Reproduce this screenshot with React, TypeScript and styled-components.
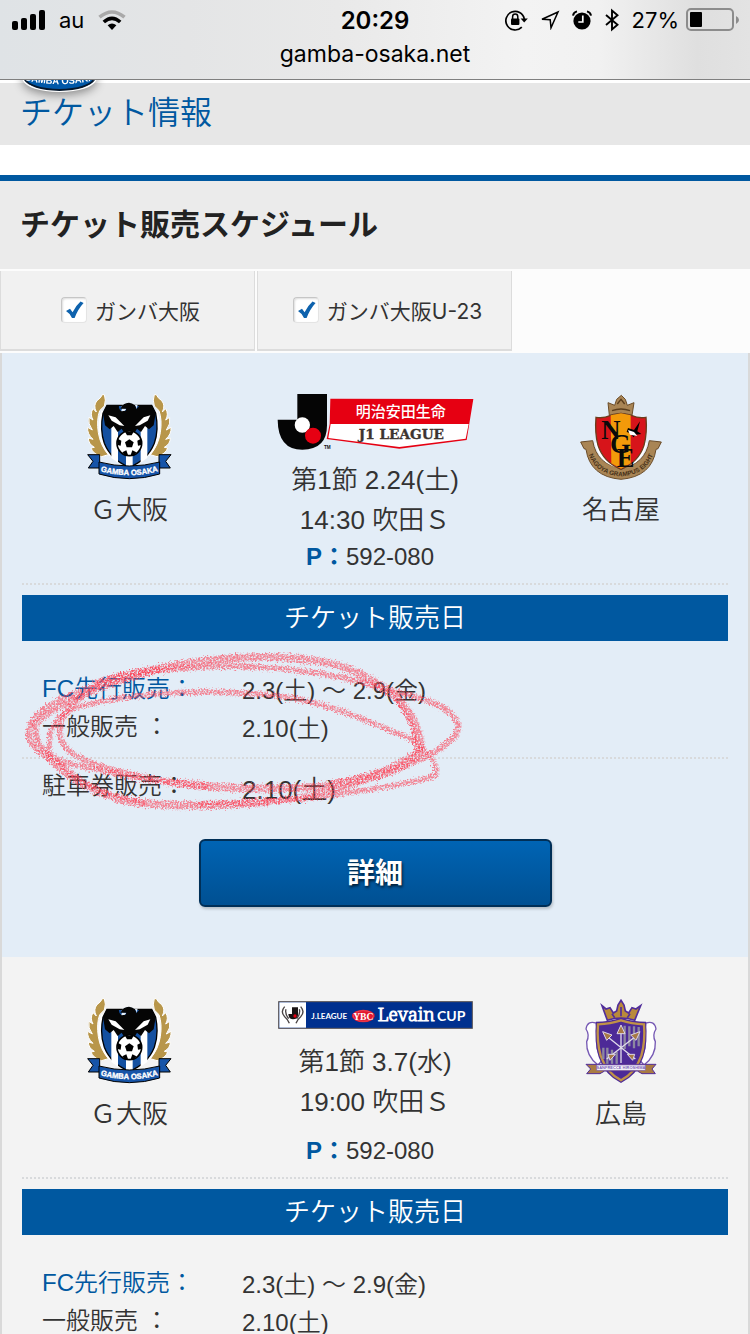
import React from 'react';
import styled, { createGlobalStyle } from 'styled-components';

const GlobalStyle = createGlobalStyle`
  * { box-sizing: border-box; }
  body {
    margin: 0;
    background: #fff;
    color: #333;
    font-family: 'Liberation Sans', 'Noto Sans CJK JP', sans-serif;
    font-weight: 350;
  }
  h1, h2, h3, p, dl, dt, dd { margin: 0; }
  svg { display: block; }
`;

const blue = '#0058a0';

const Screen = styled.div`
  height: 100vh;
  display: flex;
  flex-direction: column;
`;

const BrowserBar = styled.header`
  position: relative;
  z-index: 2;
  flex: none;
  height: 80px;
  border-bottom: 1px solid #7f7f7f;
  background: linear-gradient(90deg, #dfe3e6 0%, #e4e5e6 25%, #e9e9e9 45%, #f3f3f3 70%, #f1f1f1 80%, #dfdfdf 93%, #e3e3e3 100%);
  color: #000;
  font-family: Inter, sans-serif;
  font-weight: 400;
`;

const StatusRow = styled.div`
  display: grid;
  grid-template-columns: 1fr auto 1fr;
  align-items: center;
  height: 40px;
  padding: 0 11px;
`;

const StatusGroup = styled.div<{ $end?: boolean }>`
  display: flex;
  align-items: center;
  justify-content: ${(p) => (p.$end ? 'flex-end' : 'flex-start')};
  gap: ${(p) => (p.$end ? '12px' : '14px')};
  font-size: 22px;
`;

const Clock = styled.time`
  font-size: 24px;
  font-weight: 600;
`;

const Charge = styled.span`
  display: flex;
  align-items: center;
  gap: 6px;
`;

const Address = styled.p`
  font-size: 23px;
  line-height: 28px;
  text-align: center;
`;

const Main = styled.main`
  flex: 1;
  min-height: 0;
  overflow-y: auto;
  scrollbar-width: none;
`;

const TitleBar = styled.div`
  position: relative;
  border-top: 3px solid #fff;
  padding: 0 20px 2px;
  background: #e7e7e7;
`;

const ClubBadge = styled.svg`
  position: absolute;
  top: -44px;
  left: 18px;
  filter: drop-shadow(0 3px 5px rgba(0, 0, 0, 0.4));
`;

const PageTitle = styled.h1`
  position: relative;
  color: ${blue};
  font-size: 32px;
  font-weight: 350;
  line-height: 60px;
`;

const SectionTitle = styled.h2`
  margin-top: 30px;
  border-top: 6px solid ${blue};
  padding: 0 20px;
  background: #ebebeb;
  color: #222;
  font-size: 30px;
  font-weight: 700;
  line-height: 88px;
`;

const Tabs = styled.div`
  display: flex;
  gap: 2px;
  padding: 2px 0;
  background: #fcfcfc;
`;

const Tab = styled.label`
  display: flex;
  flex: 0 0 34%;
  align-items: center;
  justify-content: center;
  gap: 8px;
  height: 80px;
  padding-left: 6px;
  border: 1px solid #dcdcdc;
  border-width: 0 1px 2px;
  background: #f1f1f1;
  font-family: Inter, 'Noto Sans CJK JP', sans-serif;
  font-size: 21px;
  font-weight: 400;
`;

const TickBox = styled.span`
  position: relative;
  width: 26px;
  height: 26px;

  svg {
    position: absolute;
    top: 4px;
    left: 5px;
    pointer-events: none;
  }

  input:not(:checked) + svg { display: none; }
`;

const Tick = styled.input`
  appearance: none;
  display: block;
  width: 26px;
  height: 26px;
  margin: 0;
  border: 1px solid #e4e4e4;
  border-top-color: #c6c6c6;
  border-left-color: #c6c6c6;
  border-radius: 4px;
  background: #fff;
  box-shadow: inset 1px 1px 2px #ddd;
`;

const Match = styled.article<{ $tone: string }>`
  border: 2px solid #d9d9d9;
  border-width: 0 2px;
  padding: 41px 20px 50px;
  background: ${(p) => p.$tone};
`;

const Fixture = styled.div`
  display: grid;
  grid-template-columns: repeat(3, 1fr);
  margin: 0 -16px;
  font-size: 26px;
  line-height: 40px;
  text-align: center;
`;

const Team = styled.div`
  display: flex;
  flex-direction: column;
  align-items: center;
  gap: 10px;
`;

const Kickoff = styled.div`
  display: flex;
  flex-direction: column;
  align-items: center;
`;

const CompetitionLogo = styled.div<{ $slim?: boolean }>`
  padding: ${(p) => (p.$slim ? '3px 0 13px' : '0 0 10px')};
`;

const PCode = styled.p`
  padding-right: 10px;
  font-size: 24px;
  line-height: 34px;
  text-align: center;

  b {
    color: ${blue};
    font-weight: 700;
  }
`;

const DottedRule = styled.hr<{ $gap: string }>`
  margin: ${(p) => p.$gap};
  border: 0;
  border-top: 2px dotted #d8dadc;
`;

const SaleHeading = styled.h3`
  margin-bottom: 29px;
  background: ${blue};
  color: #fff;
  font-size: 26px;
  font-weight: 350;
  line-height: 46px;
  text-align: center;
`;

const Sales = styled.div`
  position: relative;
`;

const SaleRow = styled.dl`
  display: grid;
  grid-template-columns: 200px 1fr;
  padding-left: 20px;
`;

const SaleLabel = styled.dt<{ $accent?: boolean }>`
  color: ${(p) => (p.$accent ? blue : 'inherit')};
  font-size: 24px;
  line-height: 38px;
`;

const SaleDate = styled.dd<{ $large?: boolean }>`
  padding-top: ${(p) => (p.$large ? '8px' : '4px')};
  font-size: ${(p) => (p.$large ? '26px' : '24px')};
  line-height: ${(p) => (p.$large ? '30px' : '34px')};
`;

const Scribble = styled.svg`
  position: absolute;
  top: -30px;
  left: -22px;
  pointer-events: none;
`;

const DetailButton = styled.button`
  display: block;
  width: 50%;
  height: 68px;
  margin: 34px auto 0;
  padding: 0 0 4px;
  border: 2px solid #002f57;
  border-radius: 6px;
  background: linear-gradient(#0064b4, #005092);
  box-shadow: 1px 2px 3px rgba(0, 0, 0, 0.2);
  color: #fff;
  font-family: inherit;
  font-size: 28px;
  font-weight: 700;
  text-shadow: 1px 2px 3px rgba(0, 0, 0, 0.7);
`;

const SignalIcon = () => (
  <svg width="34" height="22" viewBox="0 0 34 22">
    <rect x="1" y="12" width="6" height="9" rx="2" />
    <rect x="10" y="9" width="6" height="12" rx="2" />
    <rect x="19" y="5" width="6" height="16" rx="2" />
    <rect x="28" y="1" width="6" height="20" rx="2" />
  </svg>
);

const WifiIcon = () => (
  <svg width="28" height="20" viewBox="0 0 28 20" fill="none" strokeWidth="3.6">
    <path d="M1.5 7.2Q14-3.2 26.5 7.2" stroke="#a9a9a9" />
    <path d="M5.8 12Q14 4.6 22.2 12" stroke="#000" />
    <path d="M14 20l-4.4-4.7Q14 11.600 18.400 15.300z" fill="#000" />
  </svg>
);

const RotationLockIcon = () => (
  <svg width="23" height="22" viewBox="0 0 23 22">
    <path d="M16.800 18.200A9.300 9.300 0 1 1 19.300 10" fill="none" stroke="#000" strokeWidth="1.700" />
    <path d="M15.600 9.400h7.200l-3.600 4.200z" />
    <rect x="6" y="9.500" width="8.400" height="6.600" rx="1" />
    <path d="M7.600 10V7.700a2.600 2.600 0 0 1 5.200 0V10" fill="none" stroke="#000" strokeWidth="1.500" />
  </svg>
);

const LocationIcon = () => (
  <svg width="20" height="20" viewBox="0 0 20 20" fill="none" stroke="#000" strokeWidth="1.500" strokeLinejoin="miter">
    <path d="M18 2L2 9.200l8.200.6.8 8z" />
  </svg>
);

const AlarmIcon = () => (
  <svg width="20" height="20" viewBox="0 0 20 20">
    <circle cx="10" cy="11" r="8.600" />
    <path d="M1 5.600Q1.500 2.200 5 1.400M19 5.600Q18.500 2.200 15 1.400" fill="none" stroke="#000" strokeWidth="2" />
    <path d="M10.800 5.500V12H6.300" fill="none" stroke="#fff" strokeWidth="1.700" />
  </svg>
);

const BluetoothIcon = () => (
  <svg width="16" height="24" viewBox="0 0 16 24" fill="none" stroke="#000" strokeWidth="1.900">
    <path d="M2 7l11.500 9.700L8 21.500v-19l5.500 4.800L2 17" />
  </svg>
);

const BatteryIcon = () => (
  <svg width="54" height="24" viewBox="0 0 54 24">
    <rect x="2" y="1" width="46" height="21" rx="4" fill="none" stroke="#8c8c8c" strokeWidth="2" />
    <rect x="5" y="4" width="12" height="15" rx="1" />
    <path d="M51 8q3 1.500 3 4t-3 4z" fill="#8c8c8c" />
  </svg>
);

const CheckIcon = () => (
  <svg width="18" height="18" viewBox="0 0 18 18">
    <path d="M0 10l4-2.200 2.600 3.400Q10 4.600 14.500 0.600L17.600 2Q12 8 8.600 17H6Q3.600 12 0 10z" fill="#0e62ad" />
  </svg>
);

const GambaEmblem = () => (
  <svg width="86" height="86" viewBox="45 42 258 258">
    <path d="M100 44Q106 60 100 78L86 92Q76 120 82 158 88 196 112 224L92 230Q66 222 60 204L70 202Q52 192 52 174L66 178Q48 162 50 142L64 150Q50 132 54 112L66 120Q56 102 66 86L76 96Q66 76 78 62 90 54 94 44z" fill="#b8964a" stroke="#fff" strokeWidth="3" />
    <path d="M250 44Q244 60 250 78L264 92Q274 120 268 158 262 196 238 224L258 230Q284 222 290 204L280 202Q298 192 298 174L284 178Q302 162 300 142L286 150Q300 132 296 112L284 120Q294 102 284 86L274 96Q284 76 272 62 260 54 256 44z" fill="#b8964a" stroke="#fff" strokeWidth="3" />
    <path d="M94 92Q80 130 90 170 98 206 118 226M256 92Q270 130 260 170 252 206 232 226" fill="none" stroke="#fff" strokeWidth="7" />
    <path d="M96 100L108 76H242L254 100Q264 150 250 190 230 240 175 262 120 240 100 190 86 150 96 100z" fill="#1450a0" stroke="#000" strokeWidth="4" />
    <path d="M121 132h20v116l-20-14zM209 132h20v102l-20 14zM165 150h20v110h-20z" fill="#fff" />
    <path d="M144 74L153 74Q154 86 150 96L158 98 166 86 150 84Q154 68 172 68 192 68 196 84L194 94 200 74 206 74" fill="#e3edf7" />
    <path d="M108 76H144Q142 88 152 94L164 92 166 86 148 86Q156 68 174 68 194 70 196 88L206 76H242L254 100 248 136 234 148 222 138 210 156 198 146 190 160H160L152 146 140 156 128 138 116 148 102 136 96 100z" fill="#050505" />
    <path d="M112 106L134 112 160 138 146 136 122 122zM238 106L218 112 192 138 206 136 230 122z" fill="#fff" />
    <circle cx="175" cy="190" r="37" fill="#fff" stroke="#000" strokeWidth="5" />
    <path d="M175 178l13 9-5 15h-16l-5-15z" fill="#000" />
    <path d="M162 155h26l-6 11h-14zM140 176l11 6-2 15-10-2zM210 176l-11 6 2 15 10-2zM154 217l12-6 5 14-8 2zM196 217l-12-6-5 14 8 2z" fill="#000" />
    <path d="M50 224h36v40H52l14-20zM300 224h-36v40h34l-14-20z" fill="#1654a8" stroke="#000" strokeWidth="3" />
    <path d="M84 246Q175 270 266 246v36Q175 310 84 282z" fill="#1654a8" stroke="#000" strokeWidth="3" />
    <path id="gambaCurve" d="M90 274Q175 297 260 274" fill="none" />
    <text fill="#fff" stroke="#fff" fontFamily="Liberation Sans, sans-serif" fontSize="23" fontWeight="700">
      <textPath href="#gambaCurve" startOffset="50%" textAnchor="middle">GAMBA OSAKA</textPath>
    </text>
  </svg>
);

const NagoyaEmblem = () => (
  <svg width="86" height="86" viewBox="58 42 258 258">
    <path d="M152 106L148 68 168 76 174 58 188 46 200 58 206 76 226 68 220 106Q187 94 152 106z" fill="#a98555" stroke="#6b4c28" strokeWidth="3" />
    <path d="M160 92Q187 82 214 92M176 72l11-14 11 14" fill="none" stroke="#5a3d1c" strokeWidth="4" />
    <path d="M66 186L102 182Q114 254 187 264 260 254 272 182L308 186 298 206 292 208Q280 290 187 298 94 290 82 208L76 206z" fill="#a98555" stroke="#6b4c28" strokeWidth="3" />
    <path d="M112 188Q126 254 187 262 248 254 262 188" fill="none" stroke="#fff" strokeWidth="6" />
    <path d="M112 112Q134 116 156 106L187 100 218 106Q240 116 262 112 266 160 256 196 240 246 187 268 134 246 118 196 108 160 112 112z" fill="#d7141a" stroke="#6b3d1c" strokeWidth="4" />
    <path d="M156 106L187 100 216 106V250L187 266 158 250z" fill="#f39a0a" />
    <path d="M208 144l18 6 18-26-8 30 12 8-16 2-8 8-8-12-12-4z" fill="#000" />
    <path d="M208 150l18 6 10 12-22-4z" fill="#fff" />
    <g fill="#0a0a0a" fontFamily="Liberation Serif, serif" fontWeight="700" fontSize="80">
      <text x="128" y="178">N</text>
      <text x="154" y="218">G</text>
      <text x="174" y="260">E</text>
    </g>
    <path id="nagoyaCurve" d="M84 200Q100 284 187 289 274 284 290 200" fill="none" />
    <text fill="#453018" fontFamily="Liberation Sans, sans-serif" fontSize="19" fontWeight="700">
      <textPath href="#nagoyaCurve" startOffset="50%" textAnchor="middle">NAGOYA GRAMPUS EIGHT</textPath>
    </text>
  </svg>
);

const HiroshimaEmblem = () => (
  <svg width="86" height="86" viewBox="26 39 258 258">
    <path d="M114 106L98 62 110 72 122 68 132 84 142 78 146 60 155 46 164 60 168 78 178 84 188 68 200 72 214 62 196 106Q155 92 114 106z" fill="#b98a3a" stroke="#512d9a" strokeWidth="5" />
    <path d="M128 86l8 12M182 86l-8 12M155 66v28" stroke="#512d9a" strokeWidth="5" />
    <path d="M80 114Q54 106 50 132 62 150 52 170 50 212 86 240L98 226Q74 190 86 150zM230 114Q256 106 260 132 248 150 258 170 260 212 224 240L212 226Q236 190 224 150z" fill="#fff" stroke="#7659b4" strokeWidth="4" />
    <path d="M80 110Q120 110 155 98 190 110 230 110 236 170 222 216 204 270 155 294 106 270 88 216 74 170 80 110z" fill="#4d2a97" />
    <path d="M86 118Q124 116 155 106 186 116 224 118 228 170 216 212 198 264 155 286 112 264 94 212 82 170 86 118z" fill="#4d2a97" stroke="#c09247" strokeWidth="7" />
    <path d="M166 122v70M180 124v60M194 124v66M208 126v58M102 188v34M114 188v50M128 194v44M142 200v40" stroke="#8c87a0" strokeWidth="7" />
    <path d="M155 128V234M108 150L198 222M204 150L112 222" stroke="#e0dbea" strokeWidth="4" />
    <path d="M155 120l12 26h-24zM100 140l28 10-16 16zM212 140l-28 10 16 16zM116 208l22 0-16 18zM196 208l-22 0 16 18z" fill="#a77a45" stroke="#ddd6ea" strokeWidth="3" />
    <path d="M50 238h210l-12 14 10 14h-40l-14-8h-98l-14 8H52l12-14z" fill="#a97b43" stroke="#512d9a" strokeWidth="3" />
    <path d="M82 240h146v16H82z" fill="#fff" stroke="#7659b4" strokeWidth="2" />
    <text x="155" y="253" textAnchor="middle" fill="#7659b4" fontFamily="Liberation Sans, sans-serif" fontSize="12" fontWeight="700">SANFRECCE HIROSHIMA</text>
  </svg>
);

const J1Logo = () => (
  <svg width="197" height="56" viewBox="47 42 591 168">
    <path d="M108 42h89v94q0 73-74 73-73 0-74-90h59z" fill="#050505" />
    <circle cx="123" cy="135" r="23" fill="#fff" />
    <circle cx="155" cy="167" r="24" fill="#e60012" />
    <path d="M207 56L636 57 616 180 414 206 196 177 205 132z" fill="#e60012" />
    <path d="M208 132H622L613 176 414 201 201 174z" fill="#fff" />
    <text x="418" y="112" textAnchor="middle" fill="#fff" fontFamily="Noto Sans CJK JP, sans-serif" fontSize="45" fontWeight="500">明治安田生命</text>
    <text x="420" y="176" textAnchor="middle" fill="#3d3430" stroke="#3d3430" fontFamily="DejaVu Serif, serif" fontSize="41" fontWeight="700">J1 LEAGUE</text>
    <text x="188" y="208" fill="#111" fontFamily="Liberation Sans, sans-serif" fontSize="14" fontWeight="700">TM</text>
  </svg>
);

const LevainLogo = () => (
  <svg width="195" height="28" viewBox="52 47 585 84">
    <rect x="54" y="49" width="581" height="80" fill="#00308f" stroke="#5b5454" strokeWidth="3" />
    <rect x="56" y="51" width="80" height="76" fill="#fff" />
    <path d="M94 66h18v22q0 14-15 14-13 0-14-16h11z" fill="#1a1414" />
    <circle cx="103" cy="92" r="5" fill="#e60012" />
    <path d="M72 64q-14 16 0 30 10 8 14 20M120 64q14 16 0 30-10 8-14 20M76 72q-4 12 8 28M116 72q4 12-8 28" fill="none" stroke="#4a4444" strokeWidth="4" />
    <text x="152" y="100" fill="#fff" fontFamily="Lato, sans-serif" fontSize="24" fontWeight="700">J.LEAGUE</text>
    <ellipse cx="308" cy="92" rx="34" ry="19" fill="#e3172d" />
    <ellipse cx="308" cy="92" rx="30" ry="16" fill="none" stroke="#f4a6ad" strokeWidth="1" />
    <text x="308" y="103" textAnchor="middle" fill="#fff" fontFamily="Liberation Serif, serif" fontSize="29" fontWeight="700">YBC</text>
    <text x="351" y="107" fill="#fff" stroke="#fff" strokeWidth="3" fontFamily="Noto Serif, Liberation Serif, serif" fontSize="54">Levain</text>
    <text x="529" y="107" fill="#fff" fontFamily="Lato, sans-serif" fontSize="42" fontWeight="700">CUP</text>
  </svg>
);

const RedScribble = () => (
  <Scribble width="480" height="190" viewBox="0 0 1440 570">
    <defs>
      <filter id="crayon" x="0" y="0" width="1440" height="570" filterUnits="userSpaceOnUse" colorInterpolationFilters="sRGB">
        <feTurbulence type="fractalNoise" baseFrequency="0.2" numOctaves="2" seed="4" result="noise" />
        <feDisplacementMap in="SourceGraphic" in2="noise" scale="24" xChannelSelector="R" yChannelSelector="G" result="rough" />
        <feColorMatrix in="noise" type="matrix" values="0 0 0 0 0  0 0 0 0 0  0 0 0 0 0  3 0 0 0 -0.8" result="grain" />
        <feComposite in="rough" in2="grain" operator="in" />
      </filter>
    </defs>
    <g fill="none" stroke="#fa4b5e" strokeLinecap="round" strokeOpacity="0.66" filter="url(#crayon)">
      <path strokeWidth="24" d="M290 130C420 95 500 78 600 65 760 44 880 48 980 68 1070 85 1170 145 1215 200 1255 250 1265 310 1262 335 1225 390 1100 420 960 440 800 450 650 445 540 430" />
      <path strokeWidth="18" d="M540 430C400 410 250 375 200 325 150 260 190 190 340 110 480 85 640 74 760 80 950 88 1080 120 1180 155 1300 180 1370 210 1376 262 1370 310 1290 345 1200 385 1080 430 960 470 800 485" />
      <path strokeWidth="25" d="M800 485C640 500 470 500 370 480 260 450 195 400 150 355" />
      <path strokeWidth="20" d="M150 355C90 320 75 290 95 250 120 200 200 170 300 135 360 115 420 100 480 88" />
      <path strokeWidth="18" d="M480 88C340 125 170 190 110 250 95 330 160 370 280 385 400 415 480 425 620 440" />
      <path strokeWidth="16" d="M150 350C140 280 160 220 240 200 420 150 640 150 820 165 980 185 1100 240 1240 300 1280 340 1320 370 1308 405 1250 430 1120 445 1000 465 900 480 760 490 600 492" />
      <path strokeWidth="15" d="M170 360C240 440 340 470 430 488M1190 180Q1250 250 1250 330M990 430Q1180 400 1270 320" />
    </g>
  </Scribble>
);

type FixtureData = {
  tone: string;
  opponent: string;
  emblem: React.ReactNode;
  logo: React.ReactNode;
  slimLogo?: boolean;
  round: string;
  kickoff: string;
  highlighted?: boolean;
};

const fixtures: FixtureData[] = [
  {
    tone: '#e3edf7',
    opponent: '名古屋',
    emblem: <NagoyaEmblem />,
    logo: <J1Logo />,
    round: '第1節 2.24(土)',
    kickoff: '14:30 吹田Ｓ',
    highlighted: true,
  },
  {
    tone: '#f3f3f3',
    opponent: '広島',
    emblem: <HiroshimaEmblem />,
    logo: <LevainLogo />,
    slimLogo: true,
    round: '第1節 3.7(水)',
    kickoff: '19:00 吹田Ｓ',
  },
];

const MatchCard = ({ match }: { match: FixtureData }) => (
  <Match $tone={match.tone}>
    <Fixture>
      <Team>
        <GambaEmblem />
        <span>Ｇ大阪</span>
      </Team>
      <Kickoff>
        <CompetitionLogo $slim={match.slimLogo}>{match.logo}</CompetitionLogo>
        <span>{match.round}</span>
        <span>{match.kickoff}</span>
      </Kickoff>
      <Team>
        {match.emblem}
        <span>{match.opponent}</span>
      </Team>
    </Fixture>
    <PCode>
      <b>P：</b>592-080
    </PCode>
    <DottedRule $gap="9px 0 10px" />
    <SaleHeading>チケット販売日</SaleHeading>
    <Sales>
      <SaleRow>
        <SaleLabel $accent>FC先行販売：</SaleLabel>
        <SaleDate>2.3(土) ～ 2.9(金)</SaleDate>
        <SaleLabel>一般販売 ：</SaleLabel>
        <SaleDate>2.10(土)</SaleDate>
      </SaleRow>
      {match.highlighted && (
        <>
          <DottedRule $gap="11px 0 8px" />
          <SaleRow>
            <SaleLabel>駐車券販売：</SaleLabel>
            <SaleDate $large>2.10(土)</SaleDate>
          </SaleRow>
          <RedScribble />
        </>
      )}
    </Sales>
    {match.highlighted && <DetailButton type="button">詳細</DetailButton>}
  </Match>
);

const FilterTab = ({ id, label }: { id: string; label: string }) => (
  <Tab htmlFor={id}>
    <TickBox>
      <Tick id={id} type="checkbox" defaultChecked />
      <CheckIcon />
    </TickBox>
    {label}
  </Tab>
);

export default function App() {
  return (
    <Screen>
      <GlobalStyle />
      <BrowserBar>
        <StatusRow>
          <StatusGroup>
            <SignalIcon />
            <span>au</span>
            <WifiIcon />
          </StatusGroup>
          <Clock>20:29</Clock>
          <StatusGroup $end>
            <RotationLockIcon />
            <LocationIcon />
            <AlarmIcon />
            <BluetoothIcon />
            <Charge>
              27%
              <BatteryIcon />
            </Charge>
          </StatusGroup>
        </StatusRow>
        <Address>gamba-osaka.net</Address>
      </BrowserBar>
      <Main>
        <TitleBar>
          <ClubBadge width="83" height="53" viewBox="0 0 88 54" preserveAspectRatio="none">
            <path d="M6 32Q44 44 82 32V42Q76 52 44 53 12 52 6 42z" fill="#0058a8" stroke="#fff" strokeWidth="2" />
            <path d="M7 33V41Q14 51 44 52 74 51 81 41V33" fill="none" stroke="#06182c" strokeWidth="2" />
            <path id="badgeCurve" d="M8 42Q44 50 80 42" fill="none" />
            <text fill="#fff" fontFamily="Liberation Sans, sans-serif" fontSize="10" fontWeight="700">
              <textPath href="#badgeCurve" startOffset="50%" textAnchor="middle">GAMBA OSAKA</textPath>
            </text>
          </ClubBadge>
          <PageTitle>チケット情報</PageTitle>
        </TitleBar>
        <SectionTitle>チケット販売スケジュール</SectionTitle>
        <Tabs>
          <FilterTab id="gamba" label="ガンバ大阪" />
          <FilterTab id="gamba-u23" label="ガンバ大阪U-23" />
        </Tabs>
        {fixtures.map((match) => (
          <MatchCard key={match.opponent} match={match} />
        ))}
      </Main>
    </Screen>
  );
}
